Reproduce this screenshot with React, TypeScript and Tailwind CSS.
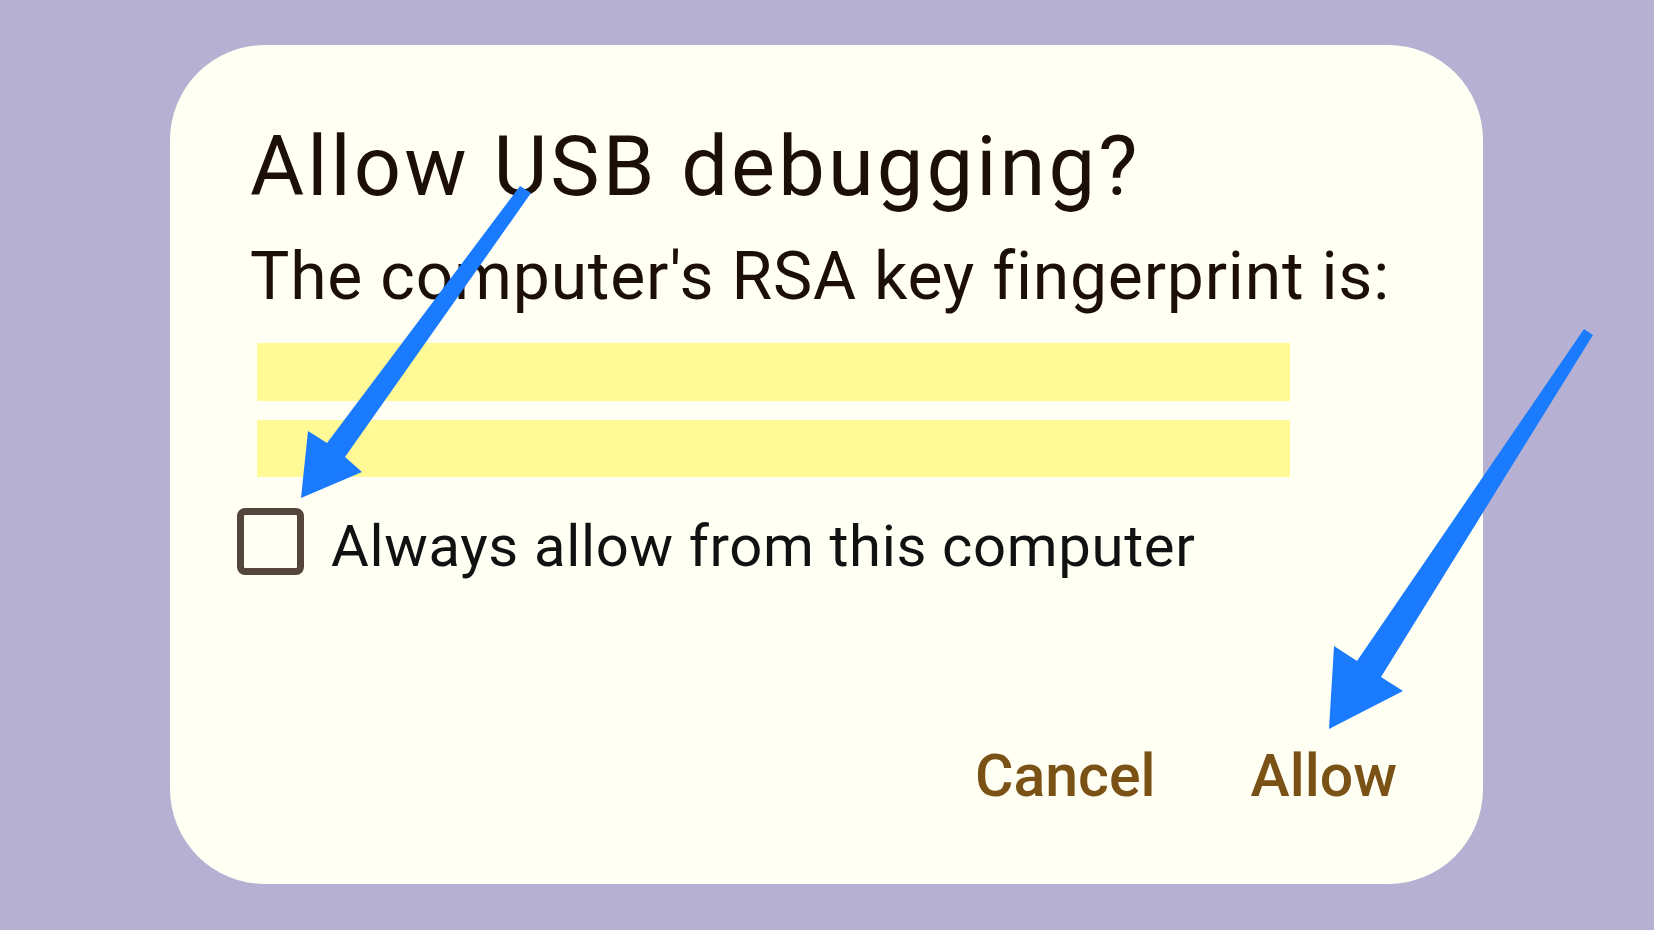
import React from 'react';

const Arrows = () => (
  <svg
    className="absolute inset-0 pointer-events-none"
    width={1654}
    height={930}
    viewBox="0 0 1654 930"
  >
    {/* arrow pointing at the checkbox */}
    <polygon
      fill="#1a7bff"
      points="520,186 531,193 345,457 362,472 301,498 308,431 327,443"
    />
    {/* arrow pointing at Allow */}
    <polygon
      fill="#1a7bff"
      points="1584,329 1593,335 1381,677 1403,691 1329,729 1334,646 1357,661"
    />
  </svg>
);

export default function App() {
  return (
    <div className="relative w-[1654px] h-[930px] overflow-hidden bg-[#b6b1d3] pt-[45px] pl-[170px] font-['Roboto',sans-serif]">
      <div className="w-[1313px] h-[839px] rounded-[95px] bg-[#fffff3] pl-[80px] pt-[80px] flex flex-col">
        {/* Title */}
        <h1 className="text-[83px] leading-none font-normal text-[#1c0f08] tracking-[3.1px]">
          Allow USB debugging?
        </h1>

        {/* Subtitle */}
        <p className="mt-[36px] text-[66px] leading-none text-[#1c0f08] tracking-[0.8px]">
          The computer's RSA key fingerprint is:
        </p>

        {/* Redacted fingerprint */}
        <div className="mt-[33px] ml-[7px] flex flex-col gap-[19px]">
          <div className="w-[1033px] h-[58px] bg-[#fffa96]" />
          <div className="w-[1033px] h-[57px] bg-[#fffa96]" />
        </div>

        {/* Checkbox row */}
        <label className="mt-[31px] -ml-[13px] flex items-end gap-[27px]">
          <span className="w-[67px] h-[67px] rounded-[8px] border-[7px] border-[#54463a]" />
          <span className="text-[58px] leading-none text-[#111111] tracking-[0.65px]">
            Always allow from this computer
          </span>
        </label>

        {/* Actions */}
        <div className="mt-auto mb-[79px] pr-[86px] flex justify-end gap-[95px] text-[59px] leading-none font-medium text-[#7b5215]">
          <button>Cancel</button>
          <button>Allow</button>
        </div>
      </div>
      <Arrows />
    </div>
  );
}
